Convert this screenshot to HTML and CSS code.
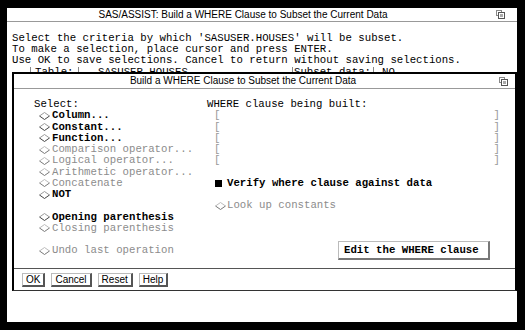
FILE: index.html
```html
<!DOCTYPE html>
<html lang="en">
<head>
    <meta charset="UTF-8">
    <title>SAS/ASSIST: Build a WHERE Clause</title>
    <link rel="stylesheet" href="styles.css">
</head>
<body>
<div class="window">
    <!-- Заголовок основного окна -->
    <div class="titlebar">
        <span class="title">SAS/ASSIST: Build a WHERE Clause to Subset the Current Data</span>
        <svg class="restore" width="9" height="9" viewBox="0 0 9 9">
            <rect x="0.5" y="0.5" width="5" height="5" fill="#fff" stroke="#888"/>
            <rect x="2.5" y="2.5" width="6" height="6" fill="#fff" stroke="#555"/>
            <rect x="4" y="4" width="3" height="3" fill="#aaa"/>
        </svg>
    </div>

    <div class="intro">
        <p>Select the criteria by which 'SASUSER.HOUSES' will be subset.</p>
        <p>To make a selection, place cursor and press ENTER.</p>
        <p>Use OK to save selections. Cancel to return without saving selections.</p>
    </div>

    <div class="table-row">
        <span class="cell cell-table">Table:</span>
        <span class="cell cell-name">SASUSER.HOUSES</span>
        <span class="cell cell-subset">Subset data:</span>
        <span class="cell cell-no">NO</span>
    </div>

    <!-- Диалог поверх окна -->
    <div class="dialog">
        <div class="titlebar">
            <span class="title">Build a WHERE Clause to Subset the Current Data</span>
            <svg class="restore" width="9" height="9" viewBox="0 0 9 9">
                <rect x="0.5" y="0.5" width="5" height="5" fill="#fff" stroke="#888"/>
                <rect x="2.5" y="2.5" width="6" height="6" fill="#fff" stroke="#555"/>
                <rect x="4" y="4" width="3" height="3" fill="#aaa"/>
            </svg>
        </div>

        <div class="dialog-body">
            <div class="col-left">
                <div class="line">Select:</div>
                <div class="opt on"><svg class="dia" width="11" height="8" viewBox="0 0 11 8"><path class="hi" d="M0.5 4 L5.5 0.5 L10.5 4"/><path class="lo" d="M0.5 4 L5.5 7.5 L10.5 4"/></svg>Column...</div>
                <div class="opt on"><svg class="dia" width="11" height="8" viewBox="0 0 11 8"><path class="hi" d="M0.5 4 L5.5 0.5 L10.5 4"/><path class="lo" d="M0.5 4 L5.5 7.5 L10.5 4"/></svg>Constant...</div>
                <div class="opt on"><svg class="dia" width="11" height="8" viewBox="0 0 11 8"><path class="hi" d="M0.5 4 L5.5 0.5 L10.5 4"/><path class="lo" d="M0.5 4 L5.5 7.5 L10.5 4"/></svg>Function...</div>
                <div class="opt off"><svg class="dia" width="11" height="8" viewBox="0 0 11 8"><path class="hi" d="M0.5 4 L5.5 0.5 L10.5 4"/><path class="lo" d="M0.5 4 L5.5 7.5 L10.5 4"/></svg>Comparison operator...</div>
                <div class="opt off"><svg class="dia" width="11" height="8" viewBox="0 0 11 8"><path class="hi" d="M0.5 4 L5.5 0.5 L10.5 4"/><path class="lo" d="M0.5 4 L5.5 7.5 L10.5 4"/></svg>Logical operator...</div>
                <div class="opt off"><svg class="dia" width="11" height="8" viewBox="0 0 11 8"><path class="hi" d="M0.5 4 L5.5 0.5 L10.5 4"/><path class="lo" d="M0.5 4 L5.5 7.5 L10.5 4"/></svg>Arithmetic operator...</div>
                <div class="opt off"><svg class="dia" width="11" height="8" viewBox="0 0 11 8"><path class="hi" d="M0.5 4 L5.5 0.5 L10.5 4"/><path class="lo" d="M0.5 4 L5.5 7.5 L10.5 4"/></svg>Concatenate</div>
                <div class="opt on"><svg class="dia" width="11" height="8" viewBox="0 0 11 8"><path class="hi" d="M0.5 4 L5.5 0.5 L10.5 4"/><path class="lo" d="M0.5 4 L5.5 7.5 L10.5 4"/></svg>NOT</div>
                <div class="line"></div>
                <div class="opt on"><svg class="dia" width="11" height="8" viewBox="0 0 11 8"><path class="hi" d="M0.5 4 L5.5 0.5 L10.5 4"/><path class="lo" d="M0.5 4 L5.5 7.5 L10.5 4"/></svg>Opening parenthesis</div>
                <div class="opt off"><svg class="dia" width="11" height="8" viewBox="0 0 11 8"><path class="hi" d="M0.5 4 L5.5 0.5 L10.5 4"/><path class="lo" d="M0.5 4 L5.5 7.5 L10.5 4"/></svg>Closing parenthesis</div>
                <div class="line"></div>
                <div class="opt off"><svg class="dia" width="11" height="8" viewBox="0 0 11 8"><path class="hi" d="M0.5 4 L5.5 0.5 L10.5 4"/><path class="lo" d="M0.5 4 L5.5 7.5 L10.5 4"/></svg>Undo last operation</div>
            </div>

            <div class="col-right">
                <div class="line">WHERE clause being built:</div>
                <div class="bracket"><span>[</span><span>]</span></div>
                <div class="bracket"><span>[</span><span>]</span></div>
                <div class="bracket"><span>[</span><span>]</span></div>
                <div class="bracket"><span>[</span><span>]</span></div>
                <div class="bracket"><span>[</span><span>]</span></div>
                <div class="line"></div>
                <div class="check"><span class="square"></span>Verify where clause against data</div>
                <div class="line"></div>
                <div class="opt off right"><svg class="dia" width="11" height="8" viewBox="0 0 11 8"><path class="hi" d="M0.5 4 L5.5 0.5 L10.5 4"/><path class="lo" d="M0.5 4 L5.5 7.5 L10.5 4"/></svg>Look up constants</div>
                <button class="edit-btn">Edit the WHERE clause</button>
            </div>
        </div>

        <div class="button-row">
            <button>OK</button>
            <button>Cancel</button>
            <button>Reset</button>
            <button>Help</button>
        </div>
    </div>
</div>
</body>
</html>
```

FILE: styles.css
```css
/* Общие стили */
body {
    margin: 0;
    padding: 8px 8px 8px 7px;
    background: #000;
    color: #000;
    font-family: "Liberation Mono", "DejaVu Sans Mono", monospace;
    font-size: 10.7px;
    line-height: 11.25px;
}

p {
    margin: 0;
    white-space: pre;
}

.window {
    position: relative;
    width: 510px;
    height: 314px;
    background: #fff;
}

/* Заголовки окон */
.titlebar {
    display: flex;
    align-items: center;
    height: 13px;
    border-bottom: 1px solid #999;
    font-family: "Liberation Sans", Arial, sans-serif;
    font-size: 10px;
    line-height: 12px;
}

.titlebar .title {
    flex: 1;
    text-align: center;
    padding-right: 17px;
}

.restore {
    margin-right: 12px;
}

.intro {
    padding: 10.5px 0 0 5px;
}

/* Строка таблицы под диалогом */
.table-row {
    display: flex;
    margin-top: 1px;
    padding-left: 23px;
    white-space: pre;
}

.cell {
    box-sizing: border-box;
}

.cell-table {
    width: 49px;
    padding-left: 4px;
    border-left: 1px solid #888;
    border-right: 1px solid #888;
}

.cell-name {
    width: 213px;
    padding-left: 19px;
}

.cell-subset {
    width: 82px;
    padding-left: 1px;
    border-left: 1px solid #888;
    border-right: 1px solid #888;
}

.cell-no {
    padding-left: 8px;
}

/* Диалог */
.dialog {
    position: absolute;
    top: 64px;
    left: 5px;
    right: 0;
    height: 219px;
    box-sizing: border-box;
    border: 2px solid #000;
    border-bottom: 1px solid #333;
    background: #fff;
    display: flex;
    flex-direction: column;
}

.dialog .titlebar {
    height: 14px;
}

.dialog .titlebar .title {
    padding-right: 27px;
}

.dialog .restore {
    margin-right: 7px;
}

.dialog-body {
    flex: 1;
    display: grid;
    grid-template-columns: 173px 1fr;
    padding: 10px 0 0 20px;
}

.line {
    height: 11.25px;
    white-space: pre;
}

.col-right {
    display: flex;
    flex-direction: column;
    align-items: flex-start;
}

/* Пункты выбора */
.opt {
    display: flex;
    align-items: center;
    height: 11.25px;
    padding-left: 5px;
    white-space: pre;
}

.opt .dia {
    margin-right: 2px;
    fill: none;
    stroke-width: 1;
}

.opt.on {
    font-weight: bold;
}

.opt.on .hi {
    stroke: #999;
}

.opt.on .lo {
    stroke: #444;
}

.opt.off {
    color: #8c8c8c;
}

.opt.off .hi {
    stroke: #bbb;
}

.opt.off .lo {
    stroke: #777;
}

.opt.right {
    padding-left: 8px;
}

.opt.right .dia {
    margin-right: 1px;
}

.bracket {
    display: flex;
    justify-content: space-between;
    width: 286px;
    height: 11.25px;
    margin-left: 7px;
    color: #999;
}

.check {
    display: flex;
    align-items: center;
    height: 11.25px;
    padding-left: 8px;
    font-weight: bold;
    white-space: pre;
}

.square {
    width: 7px;
    height: 7px;
    margin-right: 5px;
    background: #000;
}

.edit-btn {
    margin: 29.5px 0 0 131px;
    padding: 2.5px 9px 2.5px 5px;
    font-family: inherit;
    font-size: inherit;
    line-height: 11.25px;
    font-weight: bold;
    color: #000;
    background: #fff;
    border: 1px solid #bbb;
    border-right: 2px solid #777;
    border-bottom: 2px solid #777;
    border-radius: 0;
}

/* Кнопки внизу */
.button-row {
    display: flex;
    align-items: flex-start;
    gap: 6px;
    height: 22px;
    box-sizing: border-box;
    padding: 4px 0 0 8px;
    border-top: 1px solid #555;
}

.button-row button {
    height: 14px;
    padding: 0 3px;
    font-family: "Liberation Sans", Arial, sans-serif;
    font-size: 10px;
    line-height: 11px;
    color: #000;
    background: #fff;
    border: 1px solid #bbb;
    border-right: 2px solid #555;
    border-bottom: 2px solid #555;
    border-radius: 0;
}
```
